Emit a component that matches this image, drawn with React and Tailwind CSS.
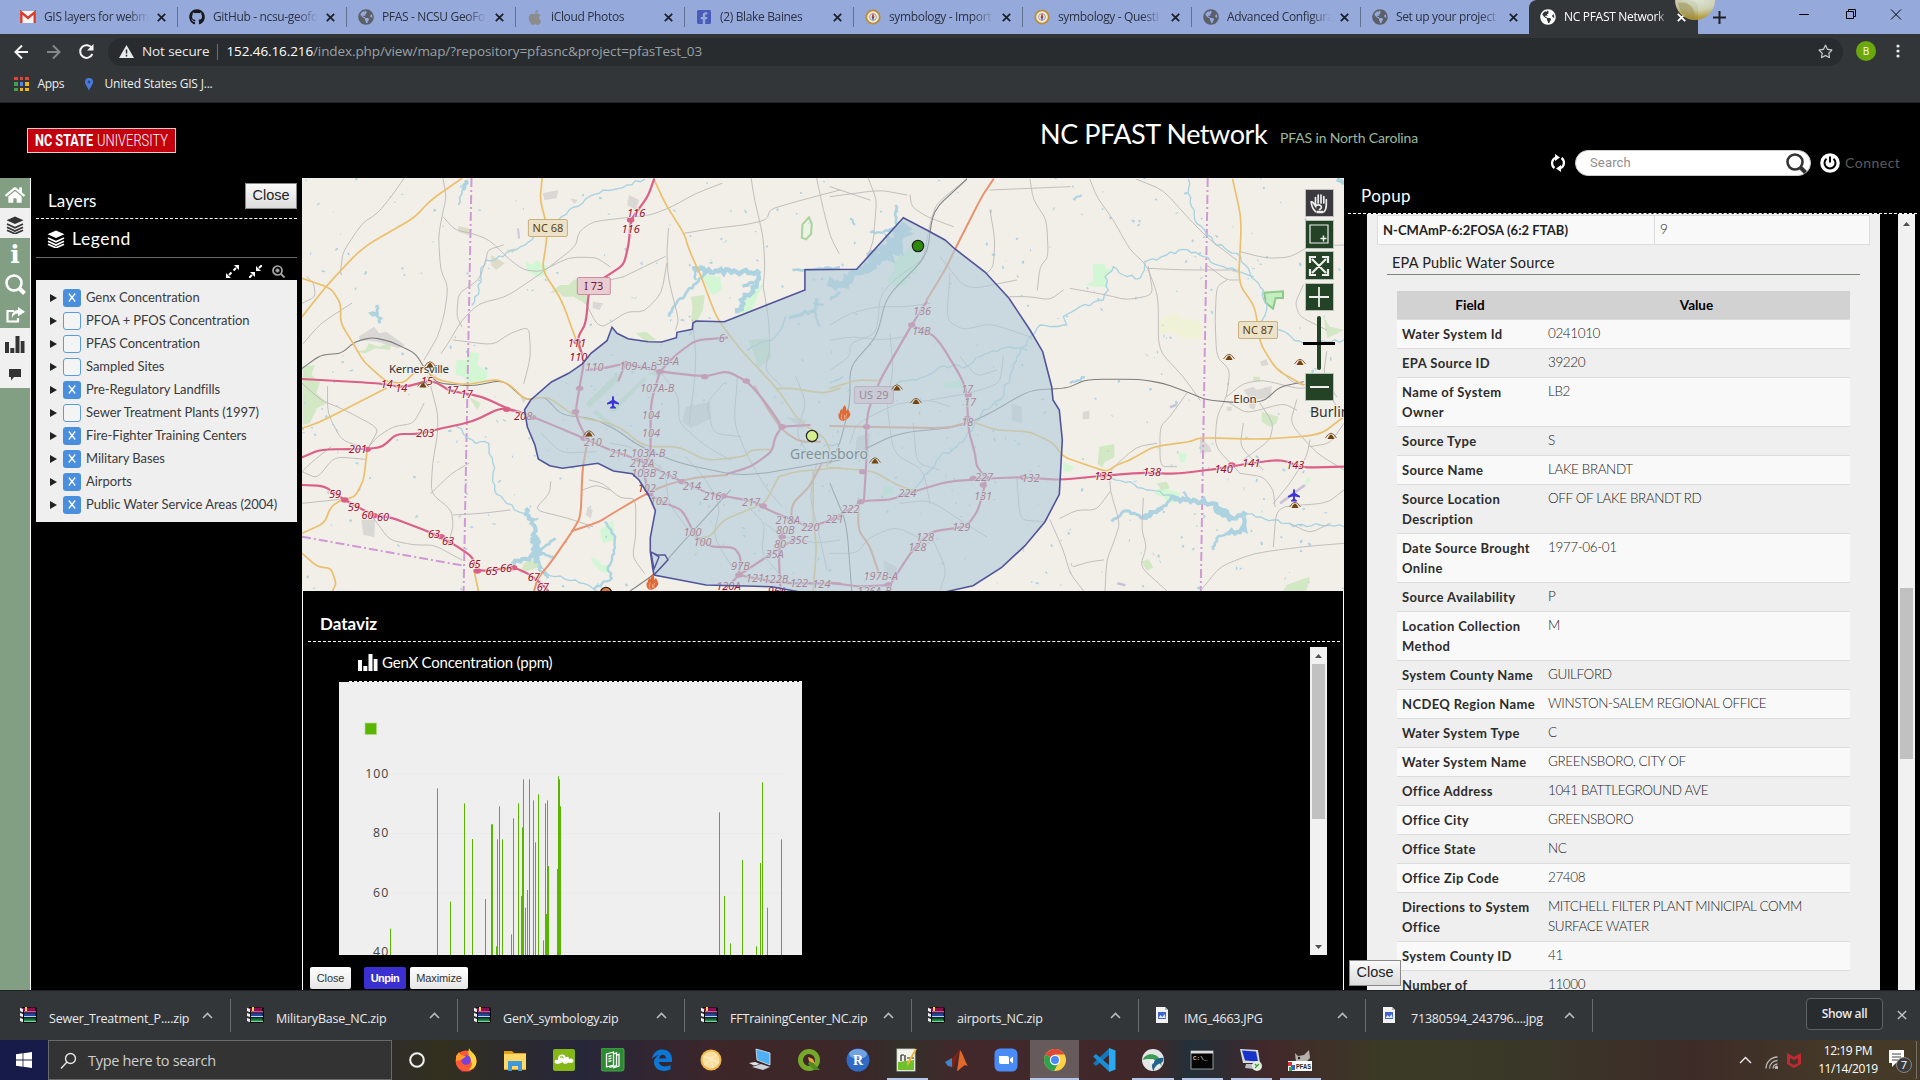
import React from "react";
import { FaGithub, FaApple, FaGlobeAmericas, FaFacebookSquare, FaRegStar, FaCommentAlt, FaHome } from "react-icons/fa";

/* ---------- Browser tab strip ---------- */

const Globe = ({ className }) => <FaGlobeAmericas className={className} size={16} />;

const Gmail = () => (
  <svg width="16" height="14" viewBox="0 0 16 14">
    <rect x="0" y="1" width="16" height="12" fill="#f4f4f4" />
    <path d="M1.3 13V2.4L8 8l6.7-5.6V13" fill="none" stroke="#d93a2e" strokeWidth="2.4" />
  </svg>
);

const Compass = () => (
  <svg width="16" height="16" viewBox="0 0 16 16">
    <circle cx="8" cy="8" r="7.6" fill="#b58f3a" />
    <circle cx="8" cy="8" r="5.8" fill="#f3ead0" />
    <circle cx="8" cy="8" r="3.4" fill="none" stroke="#8d92b8" strokeWidth=".9" />
    <path d="M8 4l1.4 4H6.6z" fill="#d0332b" />
    <path d="M8 12l1.4-4H6.6z" fill="#4a5b9c" />
  </svg>
);

const TABS = [
  { title: "GIS layers for webm", icon: <Gmail /> },
  { title: "GitHub - ncsu-geofo", icon: <FaGithub size={16} className="text-[#15181c]" /> },
  { title: "PFAS - NCSU GeoFo", icon: <Globe className="text-[#5b5f68]" /> },
  { title: "iCloud Photos", icon: <FaApple size={17} className="text-[#8c8c8c]" /> },
  { title: "(2) Blake Baines", icon: <FaFacebookSquare size={16} className="text-[#4a5cb8]" /> },
  { title: "symbology - Import", icon: <Compass /> },
  { title: "symbology - Questi", icon: <Compass /> },
  { title: "Advanced Configura", icon: <Globe className="text-[#5b5f68]" /> },
  { title: "Set up your project", icon: <Globe className="text-[#5b5f68]" /> },
];

const Cross = ({ size = 9, w = 1.8 }) => (
  <svg width={size} height={size} viewBox="0 0 9 9" stroke="currentColor" strokeWidth={w} className="shrink-0">
    <path d="M.8.8l7.4 7.4M8.2.8L.8 8.2" />
  </svg>
);

function TabStrip() {
  return (
    <div className="relative flex h-[34px] shrink-0 bg-[#96a9db] pl-[9px] text-[12px]">
      {TABS.map((t, i) => (
        <div key={i} className={i === 8 ? "flex w-[168px] shrink-0 items-center pl-[11px] text-[#2a3140]" : "flex w-[169px] shrink-0 items-center pl-[11px] text-[#2a3140]"}>
          <span className="flex w-4 shrink-0 justify-center">{t.icon}</span>
          <span className="ml-2 w-[105px] overflow-hidden whitespace-nowrap tracking-[-0.35px] [mask-image:linear-gradient(90deg,#000_80%,transparent)]">{t.title}</span>
          <span className="ml-[8px] flex w-[9px] text-[#1c212b]"><Cross /></span>
          <span className={i === 8 ? "ml-[11px] h-5" : "ml-[11px] h-5 w-px bg-[#60708f]"} />
        </div>
      ))}
      <div className="flex w-[169px] shrink-0 items-center rounded-t-lg bg-[#323639] pl-[11px] text-white">
        <Globe className="shrink-0 text-white" />
        <span className="ml-2 w-[105px] overflow-hidden whitespace-nowrap tracking-[-0.3px] [mask-image:linear-gradient(90deg,#000_88%,transparent)]">NC PFAST Network</span>
        <span className="ml-[8px]"><Cross /></span>
      </div>
      <svg className="absolute top-0 left-[1674px]" width="42" height="21" viewBox="0 0 42 21">
        <defs>
          <radialGradient id="ball" cx=".5" cy="-.1" r="1">
            <stop offset="0" stopColor="#e9efdc" />
            <stop offset=".6" stopColor="#d3d6b0" />
            <stop offset="1" stopColor="#b99b2c" />
          </radialGradient>
        </defs>
        <path d="M1 0a20 20 0 0 0 40 0z" fill="url(#ball)" fillOpacity=".9" />
        <path d="M4 3c10-2 18 4 17 17C11 19 5 12 4 3z" fill="#9b8f4f" fillOpacity=".55" />
      </svg>
      <div className="ml-[15px] flex items-center text-[#1d2027]">
        <svg width="13" height="13" viewBox="0 0 13 13" stroke="currentColor" strokeWidth="2"><path d="M6.5 0v13M0 6.5h13" /></svg>
      </div>
      <div className="absolute top-2 left-[1799px] flex text-black">
        <svg width="110" height="14" viewBox="0 0 110 14" fill="none" stroke="currentColor" strokeWidth="1">
          <path d="M0 6.500h10M92 1.500l10 10M102 1.500l-10 10" />
          <path d="M47.500 3.500h7v7h-7zM49.500 3.500v-2h7v7h-2" />
        </svg>
      </div>
    </div>
  );
}

function Toolbar() {
  return (
    <div className="flex h-[34px] shrink-0 items-center bg-[#323639] text-[14px]">
      <svg width="108" height="34" viewBox="0 0 108 34" fill="none" strokeWidth="2">
        <path d="M28 18H16M22 11.500L15.500 18l6.500 6.500" stroke="#f4f4f4" />
        <path d="M47 18h12M53 11.500l6.500 6.500-6.500 6.500" stroke="#85888a" />
        <path d="M92 14.500A6.300 6.300 0 1 0 92.300 20" stroke="#f4f4f4" />
        <path d="M93.500 10v6.500H87z" fill="#f4f4f4" />
      </svg>
      <div className="mt-px flex h-7 w-[1735px] items-center rounded-full bg-[#282c2f] pl-[11px] text-[#9aa0a6]">
        <svg width="15" height="13" viewBox="0 0 15 13"><path d="M7.500 0L15 13H0z" fill="#e8eaed" /><path d="M7.500 4.500v4M7.500 9.700v1.700" stroke="#282c2f" strokeWidth="1.500" /></svg>
        <span className="ml-2 text-[13.5px] tracking-[-0.1px] text-[#e8eaed]">Not secure</span>
        <span className="ml-2 h-4 w-px bg-[#6b6f73]" />
        <span className="ml-[8px] text-[13.5px] tracking-[-0.1px]"><span className="text-white">152.46.16.216</span>/index.php/view/map/?repository=pfasnc&amp;project=pfasTest_03</span>
        <FaRegStar className="mr-[10px] ml-auto text-[#c4c7ca]" size={15} />
      </div>
      <span className="ml-[13px] flex h-5 w-5 items-center justify-center rounded-full bg-[#6aa80e] text-[10px] text-white">B</span>
      <svg className="ml-5" width="4" height="16" viewBox="0 0 4 16" fill="#e8eaed"><circle cx="2" cy="3" r="1.600" /><circle cx="2" cy="8" r="1.600" /><circle cx="2" cy="13" r="1.600" /></svg>
    </div>
  );
}

function Bookmarks() {
  const dots = ["#e0443a", "#e0443a", "#e0443a", "#3fa14c", "#5b82e8", "#efb41a", "#3fa14c", "#efb41a", "#efb41a"];
  return (
    <div className="flex h-[35px] shrink-0 items-center border-b border-[#222527] bg-[#323639] pb-[2px] pl-[14px] text-[12px] text-[#eceef0]">
      <span className="grid grid-cols-3 gap-[2px]">
        {dots.map((c, i) => <svg key={i} width="3.500" height="3.500"><rect width="4" height="4" fill={c} /></svg>)}
      </span>
      <span className="ml-[9px] w-[30px] tracking-[-0.3px]">Apps</span>
      <svg className="ml-[17px]" width="8" height="13" viewBox="0 0 8 13"><path d="M4 0a4 4 0 0 1 4 4c0 3-3 5-4 9-1-4-4-6-4-9a4 4 0 0 1 4-4z" fill="#4a7bdc" /><circle cx="4" cy="4" r="1.400" fill="#274a94" /></svg>
      <span className="ml-[12px] tracking-[-0.2px]">United States GIS J...</span>
    </div>
  );
}

/* ---------- Application header ---------- */

function Header() {
  return (
    <header className="flex h-[75px] shrink-0 bg-black font-['Lato',sans-serif]">
      <svg className="mt-[25px] ml-[27px]" width="149" height="25" viewBox="0 0 149 25">
        <rect x=".5" y=".5" width="148" height="24" fill="#c4000e" stroke="#e9c9c9" />
        <g fill="#fff" fontFamily="Roboto" fontSize="16">
          <text x="8" y="18" fontWeight="700" textLength="58" lengthAdjust="spacingAndGlyphs">NC STATE</text>
          <text x="70" y="18" fontWeight="300" textLength="71" lengthAdjust="spacingAndGlyphs">UNIVERSITY</text>
        </g>
      </svg>
      <h1 className="mt-[13px] ml-[864px] w-[240px] text-[27px] leading-[36px] tracking-[-0.45px] whitespace-nowrap text-white">NC PFAST Network</h1>
      <span className="mt-[25px] w-[150px] text-[14px] leading-[20px] tracking-[-0.15px] whitespace-nowrap text-[#9db89d]">PFAS in North Carolina</span>
      <div className="mt-[46px] ml-[120px] flex h-7 items-center">
        <svg width="16" height="18" viewBox="0 0 16 18" fill="none" stroke="#fff" strokeWidth="2.200">
          <path d="M6 3.500A6 6 0 0 0 4.500 14M10 14.500A6 6 0 0 0 11.500 4" />
          <path d="M5 0l5 3.500-5 3.500zM11 11v7l-5-3.500z" fill="#fff" stroke="none" />
        </svg>
        <div className="ml-[9px] flex h-[26px] w-[236px] items-center rounded-full border border-[#ccc] bg-white pl-[14px] font-['Roboto',sans-serif] text-[13px] tracking-[0.15px] text-[#8e8e8e]">
          Search
          <svg className="mr-[3px] ml-auto" width="21" height="21" viewBox="0 0 21 21" fill="none" stroke="#333"><circle cx="9" cy="9" r="7.500" strokeWidth="2.600" /><path d="M14.500 14.500l5 5" strokeWidth="4" /></svg>
        </div>
        <svg className="ml-[9px]" width="20" height="20" viewBox="0 0 20 20"><circle cx="10" cy="10" r="9.800" fill="#fff" /><path d="M6.500 5.800a5.500 5.500 0 1 0 7 0M10 3.500v6" fill="none" stroke="#000" strokeWidth="2" /></svg>
        <span className="-mt-[2px] ml-[5px] text-[14px] tracking-[0.5px] text-[#5c5c5c]">Connect</span>
      </div>
    </header>
  );
}

/* ---------- Left side ---------- */

const Stack = ({ size = 18, color = "#fff" }) => (
  <svg width={size} height={size} viewBox="0 0 18 18">
    <path d="M9 .5l8.500 3.700L9 8 .5 4.200z" fill={color} />
    <path d="M1 8l8 3.700L17 8M1 11.300L9 15l8-3.700M1 14.300l8 3.500 8-3.500" fill="none" stroke={color} strokeWidth="1.700" />
  </svg>
);

const Bars = ({ color = "#fff" }) => (
  <svg width="20" height="17" viewBox="0 0 20 17" fill={color}><path d="M0 6h4v11H0zM5.300 12h4v5h-4zM10.500 0h4v17h-4zM15.700 5H19.500v12h-3.800z" /></svg>
);

const MENU = [
  { icon: <FaHome size={20} color="#fff" /> },
  { on: true, icon: <Stack color="#333" /> },
  { icon: <span className="font-['DejaVu_Serif',serif] text-[25px] leading-none font-bold text-white">i</span> },
  { icon: <svg width="21" height="21" viewBox="0 0 21 21" fill="none" stroke="#fff"><circle cx="9" cy="9" r="7.500" strokeWidth="2.600" /><path d="M14.500 14.500l5 5" strokeWidth="4" /></svg> },
  { icon: <svg width="19" height="16" viewBox="0 0 19 16"><path d="M8 4H1.500v10.500H12V11" fill="none" stroke="#fff" strokeWidth="2.200" /><path d="M12 0l7 4.800-7 4.800V6.500C9 6.500 7 8 6 11c-.5-5 2-8 6-8z" fill="#fff" /></svg> },
  { on: true, icon: <Bars color="#333" /> },
  { on: true, icon: <svg width="14" height="12" viewBox="0 0 14 12"><path d="M1 0h12v8H6l-3 3.500V8H1z" fill="#333" /></svg> },
];

const LAYERS = [
  ["Genx Concentration", true],
  ["PFOA + PFOS Concentration", false],
  ["PFAS Concentration", false],
  ["Sampled Sites", false],
  ["Pre-Regulatory Landfills", true],
  ["Sewer Treatment Plants (1997)", false],
  ["Fire-Fighter Training Centers", true],
  ["Military Bases", true],
  ["Airports", true],
  ["Public Water Service Areas (2004)", true],
];

const PlainButton = ({ className = "" }) => (
  <button className={"h-[26px] w-[52px] border border-[#8a8a8a] bg-gradient-to-b from-[#fafafa] to-[#dcdcdc] font-['Liberation_Sans',sans-serif] text-[14.5px] text-[#222] " + className}>Close</button>
);

function LeftPanel() {
  return (
    <aside className="flex w-[302px] shrink-0 bg-black">
      <nav className="w-[31px] border-r border-white bg-[#839f83]">
        {MENU.map((m, i) => (
          <div key={i} className={m.on ? "flex h-[30px] items-center justify-center bg-[#f0f0f0] pt-[3px]" : "flex h-[30px] items-center justify-center pt-[3px]"}>{m.icon}</div>
        ))}
      </nav>
      <div className="ml-[5px] w-[261px] font-['Lato',sans-serif]">
        <div className="flex h-[41px] justify-between border-b border-dashed border-white pl-3">
          <span className="mt-[12px] text-[17px] leading-[22px] tracking-[0.1px] text-white">Layers</span>
          <PlainButton className="mt-[5px]" />
        </div>
        <div className="flex h-[39px] items-center gap-[7px] border-b border-[#6a6a6a] pt-[2px] pl-[11px] text-[17.5px] tracking-[0.6px] text-white">
          <Stack /> Legend
        </div>
        <div className="flex h-[22px] items-center justify-end gap-[10px] pt-[4px] pr-[12px]">
          <svg width="13" height="13" viewBox="0 0 13 13" fill="#fff" stroke="#fff"><path d="M3 10l2.500-2.500M10 3L7.500 5.500" strokeWidth="2" /><path d="M13 0v5L8 0zM0 13V8l5 5z" stroke="none" /></svg>
          <svg width="13" height="13" viewBox="0 0 13 13" fill="#fff" stroke="#fff"><path d="M0 13l3-3M13 0l-3 3" strokeWidth="2" /><path d="M7 1v5h5zM6 12V7H1z" stroke="none" /></svg>
          <svg width="13" height="13" viewBox="0 0 13 13" fill="none" stroke="#aaa"><circle cx="5.500" cy="5.500" r="4.500" strokeWidth="1.700" /><path d="M9 9l3.500 3.500M5.500 3.500v4M3.500 5.500h4" strokeWidth="1.800" /></svg>
        </div>
        <ul className="h-[242px] bg-[#efefef] pt-[6px] text-[13px] text-[#3a3a3a]">
          {LAYERS.map(([name, on]) => (
            <li key={name} className="flex h-[23px] items-center pl-[14px]">
              <svg width="7" height="8" viewBox="0 0 7 8"><path d="M0 0l7 4-7 4z" fill="#222" /></svg>
              {on ? (
                <span className="ml-[6px] flex h-[18px] w-[18px] items-center justify-center rounded-[3px] bg-[#4a8fdd] text-white"><svg width="8" height="9" viewBox="0 0 8 9" stroke="currentColor" strokeWidth="1.300"><path d="M.8.5l6.400 8M7.200.5l-6.400 8" /></svg></span>
              ) : (
                <span className="ml-[6px] h-[18px] w-[18px] rounded-[3px] border border-[#5b9be0] bg-[#f4f4f4]" />
              )}
              <span className="ml-[5px] tracking-[-0.06px] whitespace-nowrap">{name}</span>
            </li>
          ))}
        </ul>
      </div>
    </aside>
  );
}

/* ---------- Map ---------- */

/* The western and eastern halves are digitised on separate grids. */
const WEST = "translate(300 170) scale(0.34439 0.33333)";
const EAST = "translate(830 170) scale(0.33333)";
const west = (x, y) => [300 + x * 0.34439, 170 + y / 3];
const east = (x, y) => [830 + x / 3, 170 + y / 3];

const parse = (pts) => pts.trim().split(/\s+/).map((p) => p.split(",").map(Number));

const line = (pts) => {
  const n = parse(pts);
  let d = `M${n[0][0]} ${n[0][1]}`;
  for (let i = 1; i < n.length - 1; i++) {
    const [ax, ay] = n[i];
    const [px, py] = n[i - 1];
    const [bx, by] = n[i + 1];
    d += `L${ax + (px - ax) * 0.3} ${ay + (py - ay) * 0.3}Q${ax} ${ay} ${ax + (bx - ax) * 0.3} ${ay + (by - ay) * 0.3}`;
  }
  const e = n[n.length - 1];
  return d + `L${e[0]} ${e[1]}`;
};

const random = (seed) => () => ((seed = (seed * 16807) % 2147483647) / 2147483647);

/* Meandering line: every segment is split and its joints pushed sideways. */
const meander = (pts, amp, step = 14) => {
  const n = parse(pts);
  const r = random(Math.round(n[0][0] * 31 + n[0][1] * 7 + 11));
  let d = `M${n[0][0]} ${n[0][1]}`;
  for (let i = 1; i < n.length; i++) {
    const [ax, ay] = n[i - 1];
    const [bx, by] = n[i];
    const len = Math.hypot(bx - ax, by - ay) || 1;
    const k = Math.max(1, Math.round(len / step));
    for (let j = 1; j <= k; j++) {
      const o = j === k ? 0 : (r() - 0.5) * 2 * amp;
      d += `L${(ax + ((bx - ax) * j) / k - ((by - ay) / len) * o).toFixed(1)} ${(ay + ((by - ay) * j) / k + ((bx - ax) / len) * o).toFixed(1)}`;
    }
  }
  return d;
};

const W = {
  minor: [
    "302,25 265,80 225,130 180,160 125,245 118,300", "415,25 425,80 412,140 402,200 408,300 430,350 420,430 400,500 360,570",
    "415,140 450,180 500,190 550,210 610,270 650,300 700,305 780,262 860,262 900,290", "1225,40 1150,70 1080,110 1020,135 930,145 850,155 810,185 800,230 700,310 600,380 520,400 470,450 430,520 410,550",
    "1070,175 1065,250 1070,330 1100,450 1090,480", "1115,190 1200,175 1290,165 1355,150 1365,118 1440,95 1568,60", "1310,25 1320,90 1345,200 1350,290 1345,350", "1500,25 1520,120 1540,200 1565,250",
    "590,225 545,240 540,270 520,330 460,370 455,440 470,470", "6,400 45,380 40,340 20,320", "6,640 60,690 130,720 230,775 200,830", "360,700 330,760 270,770 225,800 200,830",
    "380,650 400,730 400,790 385,880 380,970 440,1020 445,1070 430,1120", "6,905 50,925 100,860 190,868", "6,905 30,880 90,830", "445,1035 530,1030 610,1020", "210,1040 260,1110 330,1125 390,1125 470,1170",
    "840,930 880,940 930,985 975,985 975,1100 965,1160 1000,1210", "728,935 725,970 680,1020 780,1045 850,1070", "445,510 560,525 610,490 665,470 670,560 650,640", "905,455 950,425 1000,425 1050,370 1065,280",
    "905,455 880,470 860,460 830,400", "1345,350 1360,440 1365,540 1350,600 1400,650", "1270,620 1260,760 1300,860 1350,950 1400,1010", "1050,610 1100,680 1100,760 1180,830 1250,870", "1230,640 1180,700 1200,790 1280,800", "1120,860 1180,930 1220,1010 1200,1100 1260,1200",
    "1440,620 1470,700 1440,790 1480,860", "1350,1060 1400,1100 1500,1120 1568,1110", "1300,1010 1350,1060 1340,1150 1400,1220", "900,820 960,830 1060,900 1070,1000 1150,1110", "700,790 760,850 860,845", "6,1000 100,990 130,985", "1500,880 1480,980 1500,1060 1530,1200", "1140,450 1150,560 1145,640 1130,760",
    "10,520 60,460 150,400", "490,880 440,910 380,970", "80,650 80,730 120,810 190,835", "940,320 880,335 835,330", "820,960 860,945 900,960", "1060,260 1000,290 940,320",
  ],
  rail: ["6,595 60,555 120,550 160,515 210,502 265,515 335,550 365,600 400,640 500,648 590,630 655,690 710,680 760,735 850,745 920,780 980,825 1100,880 1290,920 1568,870", "1250,960 1180,1040 1100,1130 1030,1212 960,1262"],
  yellow: [
    "470,25 380,90 330,145 210,215 165,250 75,350 6,440", "6,325 90,355 118,400 118,460 160,530 185,575 250,635 300,640 350,590 400,630 480,645 570,628 610,645 655,690 720,680 800,740 920,765 1000,830 1100,830 1180,872 1290,860 1310,840 1370,838",
    "703,25 697,90 718,170 715,220 703,300 760,390 805,520 825,570", "1028,28 1060,100 1115,190 1130,240 1165,320 1210,445 1280,540 1385,655 1450,755 1520,800 1540,840 1530,890", "6,775 60,755 250,655", "195,840 185,930 160,980 120,990 90,1010 70,1060 6,1090", "6,1150 50,1190 90,1195 105,1240 95,1262", "505,1200 518,1262",
    "1385,655 1430,655 1520,670 1568,655", "1390,920 1350,1000 1300,1020 1230,1050 1190,1100 1150,1105", "1390,920 1440,905 1568,893", "1490,905 1490,1050 1500,1130 1490,1262",
  ],
  trunk: ["832,830 820,900 815,1040 790,1085 730,1175 690,1225 680,1262", "790,1083 870,1055 900,1035 990,980 1060,945 1150,922 1240,915", "1320,650 1360,720 1400,780 1450,815 1510,815", "1515,880 1480,950 1430,1000 1425,1050"],
  motor: [
    "6,627 230,640 300,652 375,632 400,640 435,662 530,680 600,715 650,730 680,742 825,805 900,840 985,870 1050,905 1110,935 1180,968 1240,980 1320,995 1360,1020 1430,1050 1480,1072 1540,1050 1568,1045",
    "6,862 60,838 200,837 240,830 280,792 345,792 400,778 500,755 580,715 620,722", "6,945 70,948 130,990 215,1037 265,1042 380,1088 440,1118 500,1160 515,1205 620,1192 665,1212 700,1240 720,1262",
    "1028,28 1010,80 960,150 955,220 940,285 885,322 840,350 830,460 805,505 825,575 812,650 800,725 810,760 830,800", "832,600 880,595 945,580 1045,605 1175,620 1240,603 1300,635 1350,695 1400,770 1380,800 1370,845 1310,890 1240,912",
    "945,580 925,632", "1045,605 1018,700 1018,860 995,880 1010,970 1060,1000 1110,1020 1150,1100 1190,1130 1260,1132 1280,1160 1275,1215 1230,1262", "1045,605 1090,555 1150,510 1240,503", "1275,1215 1400,1130 1450,1100", "1400,1090 1390,1150 1395,1262", "1275,1215 1400,1240 1568,1240", "1400,770 1480,765",
  ],
  knots: "195,838 600,718 130,990 215,1037 410,1100 515,1203 620,1193 675,742 805,515 812,655 800,725 825,805 945,580 1045,605 1175,620 1296,633 1400,770 1015,970 1110,935 1230,978 1345,1008 1275,1215 1400,1100 960,150 985,870",
  river: ["1000,28 950,45 880,60 820,100 760,140 690,190 640,230 590,260 540,270 525,310 520,360 500,405", "455,770 510,820 548,820 560,880 565,960 600,1000 650,1030", "1568,820 1520,830", "690,1190 740,1220 800,1230 860,1262", "1410,440 1380,500 1300,540"],
  lakes: [
    [12, "655,1015 672,1060 685,1100 692,1150 640,1175 612,1182"], [8, "692,1150 742,1105"], [8, "700,1150 736,1160"], [16, "690,1135 688,1180"], [8, "690,1170 700,1205 720,1225"], [6, "665,1050 692,1045"], [18, "672,1100 690,1150"],
    [14, "1140,296 1200,308 1260,302 1335,312"], [13, "1330,310 1325,350 1290,385 1270,430"], [8, "1180,300 1150,340 1120,370 1085,410 1072,440"], [10, "1285,350 1320,340"], [7, "1140,290 1150,330"],
    [8, "1568,292 1510,295 1430,300"], [10, "1500,385 1495,420 1460,430 1420,445"], [7, "1490,400 1520,405"], [6, "1495,425 1510,470"], [8, "1568,365 1540,390"],
    [11, "482,30 472,60"], [5, "470,60 460,105"], [8, "222,405 225,430 205,430 235,445 232,460"], [7, "885,1055 915,1100 912,1150 895,1190 905,1225 850,1258"],
  ],
};
const E = {
  minor: [
    "410,25 380,55", "115,25 140,90 135,150 130,215 100,290", "230,75 150,60 0,80", "240,75 245,110 290,140 370,170", "480,120 495,210 490,290 470,310", "780,28 800,80 850,150 900,240 950,285 985,380 985,540 1060,620 1110,690", "920,28 1000,60 1080,150 1140,210 1220,270", "600,28 610,90 650,150 655,260 630,290 622,360",
    "1542,225 1440,228 1380,262 1310,265 1230,245", "700,360 660,390 600,380 540,380", "720,355 830,375 890,390 970,375 955,290", "955,295 1060,300 1225,300", "1190,330 1160,350 1155,450 1160,560 1200,600 1190,680 1160,740 1155,830 1230,910", "1225,330 1190,330 1130,285",
    "1420,345 1395,400 1410,440 1490,480", "1190,680 1240,640 1300,630 1420,660 1500,620", "1070,670 1020,740 990,770 990,890 1040,890", "980,820 920,830 840,900 840,960 870,1060 850,1120 830,1170 825,1262", "690,1045 740,1020 800,1020 840,965", "660,1050 700,1140 720,1210 760,1262",
    "940,985 935,1080 950,1130 930,1190 1010,1262", "1542,1120 1420,1130 1270,1150 1170,1190 1112,1262", "1542,960 1490,1000 1340,1010 1330,1130", "1230,910 1300,920 1330,960 1335,1010", "1440,810 1430,860 1380,940 1330,1000", "1350,600 1390,640 1480,650 1542,740", "0,465 60,430 140,410 230,410 300,400", "0,510 70,500 150,510 230,500",
    "0,600 60,560 60,520 140,490 150,380 190,330 280,270 300,160 320,100 410,28", "60,820 80,760 200,700 300,690 360,710", "210,1000 300,990 420,1070 470,1100", "250,760 260,880 330,900", "0,1150 80,1150 120,1100 200,1070 300,1120", "360,310 350,450 400,480 480,460 600,500", "330,260 410,360 560,330",
    "520,560 510,640 420,670 300,690", "560,920 570,1050 640,1055", "300,1090 350,1200 330,1262", "390,560 440,620 500,600", "1490,545 1480,620 1520,680", "1240,760 1230,830 1300,900", "1290,700 1330,760 1320,810 1240,870", "1400,690 1380,760 1460,850 1542,900", "180,490 190,600 170,700 190,850 280,900 300,1000",
    "820,1170 780,1175 730,1190", "1542,760 1500,820 1440,830", "1200,700 1250,730 1360,700 1400,720", "1380,1060 1440,1090 1500,1060", "480,60 600,55 720,50", "0,50 120,90",
  ],
  rail: ["110,835 180,800 240,785 350,775 410,762 480,730 600,660 710,655 770,628 930,628 1000,640 1070,665 1130,690 1220,698 1300,695 1350,650 1420,635", "410,28 310,120 290,260 170,380 140,500 60,590 60,700 30,820 0,880", "0,940 50,1060 65,1262"],
  yellow: ["430,757 500,780 600,785 670,820 700,860 770,885 830,905 860,885 900,870 970,830 1080,815 1110,803 1300,808 1470,795 1542,740", "1208,28 1235,150 1225,340 1275,410 1290,520 1340,600 1420,645", "0,655 80,630 150,632", "0,893 130,903 200,945 260,965"],
  trunk: ["490,28 455,80 375,238 345,300 290,390", "0,768 100,770 350,775 415,757", "85,1000 85,1080 120,1130 150,1220", "150,630 190,560 245,465"],
  motor: [
    "290,395 245,465 150,630 115,720 108,780 110,860 102,990", "245,465 320,500 410,650 415,780 435,850 440,890 470,925 445,1020 410,1070 300,1085 240,1150 180,1245", "0,1048 40,1030 100,992 180,990 250,965 350,935 480,925 575,922",
    "575,922 690,930 840,915 940,908 1040,912 1170,895 1230,885 1350,868 1420,893 1542,890", "0,1238 90,1250 180,1245",
  ],
  knots: "245,465 415,675 412,745 470,925 460,945 580,922 110,770 98,905 92,995 175,1245 430,925 820,915 1205,885",
  river: ["1075,28 1085,110 1100,160 1150,215 1220,250 1260,310 1300,360 1310,420 1290,460 1350,480 1420,520 1542,510", "945,275 980,270 1010,255 1060,238 1120,260 1180,290 1270,320", "945,275 930,325 880,315 850,290 825,320 835,360 820,390 750,410 700,440 710,465 660,470 630,465 600,500 560,560 540,620 510,690 460,720 430,770 380,830 330,860 260,950 200,980", "200,640 260,630 330,590 410,590 450,560 540,530 590,540", "830,925 900,935 950,960 1040,980", "1240,1030 1330,1050 1390,1070 1470,1065 1542,1070"],
  lakes: [
    [26, "210,165 205,220 150,262 100,290"], [20, "100,290 60,330 0,350"], [8, "196,105 202,165"], [7, "120,188 190,182"], [12, "160,225 110,255"],
    [9, "845,1055 890,1022 940,1045 990,1020 1035,978"], [12, "935,1045 1000,1015"], [13, "1020,985 1090,990 1150,1000 1200,1040 1250,1035"], [16, "1150,1010 1205,1050"], [13, "1240,1040 1245,1080 1190,1090"], [8, "1190,1090 1160,1105 1150,1140"], [7, "1060,965 1075,990"],
    [7, "720,640 765,622"], [12, "1520,28 1542,42"], [5, "0,640 40,620"], [6, "730,90 755,75"], [6, "60,145 75,165"],
  ],
};

const LABELS_W = [
  ["116", 976, 128], ["116", 960, 178], ["111", 804, 520], ["110", 808, 561], ["110", 855, 590], ["109-A-B", 982, 587], ["3B-A", 1068, 573], ["6", 1225, 505], ["107A-B", 1037, 653], ["104", 1019, 736], ["104", 1019, 788], ["210", 850, 817], ["211", 925, 848], ["103A-B", 1011, 848], ["212A", 993, 878], ["103B", 998, 909], ["213", 1069, 916], ["214", 1138, 947], ["216", 1197, 977], ["217", 1310, 997], ["102", 1007, 953], ["102", 1042, 993], ["218A", 1416, 1049], ["80B", 1409, 1079], ["220", 1482, 1071], ["221", 1552, 1046], ["100", 1140, 1085], ["100", 1169, 1116], ["80", 1394, 1121], ["35C", 1448, 1111], ["35A", 1378, 1153], ["97B", 1279, 1189], ["121", 1321, 1224], ["122B", 1382, 1226], ["122", 1449, 1238], ["124", 1514, 1242], ["120A", 1244, 1247], ["96A", 1385, 1262],
  ["14", 252, 643], ["14", 294, 653], ["15", 368, 633], ["17", 442, 660], ["17", 484, 671], ["208", 648, 737], ["203", 364, 788], ["201", 168, 838], ["59", 102, 972], ["59", 156, 1011], ["60", 196, 1034], ["60", 241, 1040], ["63", 389, 1093], ["63", 430, 1112], ["65", 507, 1181], ["65", 556, 1203], ["66", 598, 1195], ["67", 679, 1220], ["67", 705, 1252],
];
const LABELS_E = [
  ["136", 276, 424], ["14B", 274, 482], ["17", 411, 656], ["17", 420, 697], ["18", 412, 757], ["227", 462, 922], ["132", 602, 925], ["131", 459, 978], ["224", 232, 970], ["222", 61, 1016], ["129", 394, 1072], ["128", 285, 1100], ["128", 262, 1131], ["197B-A", 152, 1219], ["126A-B", 133, 1262], ["135", 820, 917], ["138", 966, 907], ["140", 1181, 896], ["141", 1264, 880], ["143", 1396, 886],
];

const AREA =
  "M804.900 269.700V290L724.300 321.700 696 321 693 323 692.300 329.300 677 332.300 676.400 337.700 661.600 342 648 341.700 628 338.700 617 333.300 612 327.300 607 340.700 591 353.300 582.400 364 568.600 373.300 551.400 382 530.700 400 524.500 410 527.300 426.700 534.900 445 538.300 459 549.700 465.700 562.400 468.300 598 463.300 613.400 471 632.300 473.700 639 480 648.500 495 655.400 510.700 650.300 537.700V551.700L653 570 654 575 680 580 706 585 772 586.700 800 592H945L973 585.700 1001.700 567.300 1025 545.700 1045 521.700 1059.300 494.300 1062.300 440 1059.300 410 1053 400 1051.700 386.700 1042.700 351.700 1030 330 1009 298.300 985 272 955 249 945 240 926.700 230 903.300 217.700 856.700 269.300z";

const speckles = (() => {
  const r = random(7);
  return Array.from({ length: 460 }, () => [302 + r() * 1041, 178 + r() * 413, 0.4 + r() * 0.9, 0.5 + r() * 1.6, r() * 180]);
})();

const Network = ({ data, transform }) => (
  <g transform={transform} fill="none" strokeLinecap="round" strokeLinejoin="round">
    <g stroke="#a9d2e0" strokeWidth="4">{data.river.map((p, i) => <path key={i} d={meander(p, 6)} />)}</g>
    <g stroke="#aed3e0" strokeLinecap="butt" strokeLinejoin="miter">
      {data.lakes.map(([w, p], i) => <path key={i} d={meander(p, w * 0.55, 8)} strokeWidth={w} />)}
    </g>
    <g stroke="#bdbbba" strokeWidth="2.800">{data.minor.map((p, i) => <path key={i} d={line(p)} />)}</g>
    <g stroke="#7d7d7d" strokeWidth="3.200">{data.rail.map((p, i) => <path key={i} d={line(p)} />)}</g>
    <g stroke="#ebc06c" strokeWidth="5">{data.yellow.map((p, i) => <path key={i} d={line(p)} />)}</g>
    <g stroke="#e89470" strokeWidth="6">{data.trunk.map((p, i) => <path key={i} d={line(p)} />)}</g>
    <g stroke="#db6088" strokeWidth="6.500">{data.motor.map((p, i) => <path key={i} d={line(p)} />)}</g>
    <g fill="#db6088">{parse(data.knots).map(([x, y], i) => <ellipse key={i} cx={x} cy={y} rx="11" ry="8" />)}</g>
  </g>
);

const Labels = ({ list, at }) =>
  list.map(([t, x, y], i) => {
    const [px, py] = at(x, y);
    return <text key={i} x={px} y={py + 4}>{t}</text>;
  });

const Shield = ({ x, y, w, text, fill, stroke, color }) => (
  <g>
    <rect x={x - w / 2} y={y - 8.500} width={w} height="17" rx="1.500" fill={fill} stroke={stroke} />
    <text x={x} y={y + 4} textAnchor="middle" fontSize="11" fill={color}>{text}</text>
  </g>
);

const Mound = ({ x, y }) => (
  <g transform={`translate(${x} ${y})`}>
    <path d="M-3.500 2.500Q-1.500-2 0-2T3.500 2.500z" fill="#74430f" />
    <path d="M-5.500 1.500Q0-8 5.500 1.500" fill="none" stroke="#8a6238" strokeWidth="1" />
  </g>
);
const Flame = ({ x, y }) => (
  <g transform={`translate(${x} ${y})`}>
    <path d="M0-9c2.500 3 1.500 5 2 6 .8-.5 1-1.500 1-2.500C5-3 5.500-1 5.300 0c.4-.4.5-.8.5-1.300C7 4-1 8-3.500 6.500-6 5-6.500 1.500-5.500-1.500c.1.700.3 1.200.7 1.600C-5-2.500-4-4-2.800-5.500c0 1 .2 1.700.6 2.300C-2.500-5.500-1-7 0-9z" fill="#dd6a36" />
    <path d="M-2 6.500C-4 4-3 1-2.200-.5M2 6C.5 4 1.500 1 2.500-.5M0 5V1" stroke="#f0b493" strokeWidth=".8" fill="none" />
  </g>
);
const Plane = ({ x, y }) => (
  <path transform={`translate(${x} ${y})`} d="M0-6c1 0 1 1 1 4l5 3v1.500L1 1.500V4l2 1.500v1H-3v-1L-1 4V1.500l-5 1V1l5-3c0-3 0-4 1-4z" fill="#3d36d8" />
);

function MapView() {
  return (
    <div className="relative h-[413px] w-[1042px] overflow-hidden bg-[#f2efe9]">
      <svg width="1042" height="413" viewBox="302 178 1042 413" fontFamily="'Noto Sans'">
        <rect x="302" y="178" width="1042" height="413" fill="#f2efe9" />
        {/* parks and built-up land */}
        <g transform={WEST}>
          <g fill="#c8facc" fillOpacity=".75">
            <path d="M455 570l30 0 5-25 30 5-5 35 30 20-5 30-50 10-15-25-25-5zM1165 315l55 5 5 40-25 15-10-10zM1350 335l-20 40-20 50-35 5 20-40 15-15zM845 1160l20 10 10 15 25 0-10 25-15-5-25-25zM870 1080l40-30 5 60-35 10zM655 275l20 10 10-15 35 20-5 25-25 5-30-15z" />
          </g>
          <g fill="#cde5bd" fillOpacity=".85">
            <path d="M725 370l30-25 25 0 15-15 40-10 20 15-20 20 0 50-40-25-30 0-15-15zM1135 380l40-5-5 45-15 30-20 5 5-40zM975 490l30-5 30 25-30 5zM8 590l35-5-10 30 25 20-10 35 30 30-50 25-20-10zM490 680l35 20-10 20zM160 545l30-5 10-20 30 10 40-15-10 25-40-5-30 15zM1050 600l-40 10 30 10zM1300 510l60-5 10 60-40 30-10-40zM830 700l90-90 15 10-95 95zM860 720l60 50-10 8-60-50zM900 720l100-100 5 10-95 100zM650 1180l40-20 10 30-60 20zM8 700l40 20-20 40-20 5z" />
          </g>
          <g fill="#d9d8d5">
            <path d="M705 70l45-10-5 25-35 5zM955 75l30 15-10 30-25-15zM170 500l45-30 15 20 20-5 55 40-20 10-60-20-50-5zM178 1050l40-3-2 55-32-8zM850 395l30 5-10 20-20-5zM835 1010l15 10-5 25-15-10zM640 680l20 5-12 15zM1120 710l70-15 5 50-60 30-25-20zM1410 740l60 10-10 30zM785 85l22 5-10 12z" />
            <path d="M555 255l40 25-25 20-15-15zM460 168l40 10-10 18-30-10zM598 240l30-5-10 15z" fill="#dcdcc9" />
          </g>
          <path d="M633 175l3 30" stroke="#cfc9dc" strokeWidth="6" />
          <path d="M1478 142l8 20-2 30-15 16-12-5 2-40z" fill="#edf3e4" stroke="#abd39f" strokeWidth="6" />
        </g>
        <g transform={EAST}>
          <g fill="#c8facc" fillOpacity=".75">
            <path d="M788 282l37 0 0 15 25 0-20 20 5 35-70-5 25-15zM240 230l30 20-10 60-30 10 0 25-40 5-20-20 25-30-5-20zM345 635l60-5-5 25-60 0zM980 960l20-10 20 10 30 10-5 25-25 5-20-20-25-5zM700 875l30 15-5 15-25-2zM1045 850l25 0-5 30-15-5zM160 950l30 0 0 20-30 10zM1430 920l15 10-20 15z" />
          </g>
          <path d="M1303 368l56-4v20h-22l-8 32-22-18z" fill="#c4eec0" stroke="#8ccb8c" strokeWidth="6" />
          <path d="M985 455l30-20 25-8 10 15 65 13 0 50-50 0-30-15-50 0z" fill="#eff2d6" />
          <g fill="#cde5bd" fillOpacity=".85"><path d="M808 830l45-8 0 40-30 15-5 15-15-10zM1295 725l50 15-5 20-20 10-25-15zM1480 440l20 30 42 10-50 25zM935 1175l20-8 15 25-20 10zM1370 1245l40-15 30-10-10 42-70 0zM1270 620l20 0 0 15-20 0zM980 940l30-5 10 20-25 5z" /></g>
          <g fill="#d9d8d5"><path d="M758 727l20-6 0 25-20 2zM1240 660l30-10 10 10 45-12-2 35-40 5-10 30-15-5 0-30zM1290 575l20-8 5 18-20 3zM1110 800l30 30 5 15-35 5zM80 800l40-10-5 70-40 0zM545 700l30 10 0 50-30-10zM1190 710l15 0 0 12-15 0zM160 1170l40 20 0 40-35-20z" /></g>
          <path d="M1350 1000l75-55M1020 712l20-8M862 1240l24 6" stroke="#c7c3d6" strokeWidth="8" />
        </g>
        <g fill="#aed3e0">
          {speckles.map(([x, y, rx, ry, a], i) => <ellipse key={i} cx={x} cy={y} rx={rx} ry={ry} transform={`rotate(${a} ${x} ${y})`} />)}
        </g>
        <g stroke="#cf9ad3" strokeWidth="2" strokeDasharray="9 3 2 3" fill="none">
          <path d="M471.500 178L463.600 591M302 536.700L463.500 565.700M1207.700 178L1200.700 591" />
        </g>
        <Network data={W} transform={WEST} />
        <Network data={E} transform={EAST} />
        <g fontSize="11" fontStyle="italic" textAnchor="middle" fill="#9c1233" stroke="#f2efe9" strokeWidth="2" strokeOpacity=".7" paintOrder="stroke">
          <Labels list={LABELS_W} at={west} />
          <Labels list={LABELS_E} at={east} />
        </g>
        <Shield x={547.900} y={228} w={39} text="NC 68" fill="#ece2c8" stroke="#c9b07c" color="#5b4012" />
        <Shield x={593.800} y={286} w={33} text="I 73" fill="#e8ccd2" stroke="#cf8a9f" color="#70183c" />
        <Shield x={1258} y={330} w={39} text="NC 87" fill="#ece2c8" stroke="#c9b07c" color="#5b4012" />
        <Shield x={873.800} y={395} w={39} text="US 29" fill="#ecc9cf" stroke="#cf8a9f" color="#70183c" />
        <g textAnchor="middle" fill="#333" stroke="#f2efe9" strokeWidth="2" paintOrder="stroke">
          <text x="419" y="372.500" fontSize="11.500" textLength="60">Kernersville</text>
          <text x="829" y="459" fontSize="14">Greensboro</text>
          <text x="1245" y="403" fontSize="11.500">Elon</text>
          <text x="1310" y="417" fontSize="14" textAnchor="start">Burlington</text>
        </g>
        <path d={AREA} fill="#b1ccd8" fillOpacity=".62" stroke="#52549a" strokeWidth="1.600" />
        <path d="M651 552l6 3 8 0 3 5-14 15M651 552l3 17 5-12-5-3" fill="none" stroke="#52549a" strokeWidth="1.400" />
        {[[430, 365], [423, 385], [589, 434], [897, 388], [916, 401.500], [875, 461], [1229, 357.500], [1300, 362.500], [1331, 436.500], [1295, 505.500]].map(([x, y], i) => <Mound key={i} x={x} y={y} />)}
        <Plane x={613} y={402} />
        <Plane x={1294} y={495} />
        <Flame x={844.500} y={414} />
        <Flame x={652.500} y={583} />
        <g stroke="#222" strokeWidth="1.200">
          <circle cx="918" cy="246" r="5.700" fill="#2e8b0a" />
          <circle cx="812" cy="436" r="5.600" fill="#d6ee8e" />
          <circle cx="606" cy="593" r="5.600" fill="#e07b3a" />
        </g>
      </svg>
      <div className="absolute top-[11px] right-[9px] flex w-[32px] flex-col items-center">
        <ToolButton dark>
          <path d="M7.500 19.500C5 17.500 3.500 13.500 3.200 9.800c1.500-.2 2.500.8 3.300 2.700L7.500 14V5.500M10.200 11V3M13 11V3M15.800 11V4.500M18.300 7.500V13c0 3.500-1 5.500-2.500 7M7.500 14c2-1.500 4-1.500 5.500 0 1 1.500 0 3-1.500 3.500" strokeWidth="1.700" strokeLinecap="round" />
          <path d="M8.500 20h6.500" strokeWidth="2.500" />
        </ToolButton>
        <ToolButton><path d="M2 2h18v18H2z" strokeWidth="1.200" /><path d="M15.500 12.500v6M12.500 15.500h6" strokeWidth="1.500" /></ToolButton>
        <ToolButton><path d="M2 8V2h6M14 2h6v6M20 14v6h-6M8 20H2v-6M4 4l14 14M18 4L4 18" strokeWidth="2.200" /></ToolButton>
        <ToolButton><path d="M11 1v20M1 11h20" strokeWidth="1.800" /></ToolButton>
        <div className="relative mt-[2px] h-[54px] w-1 rounded bg-[#234226]">
          <div className="absolute top-[26px] left-[-14px] h-[3px] w-8 bg-black" />
        </div>
        <div className="mt-[3px]"><ToolButton><path d="M2 11h19" strokeWidth="2" /></ToolButton></div>
      </div>
    </div>
  );
}

const ToolButton = ({ dark, children }) => (
  <div className={"mb-[2.800px] flex h-[28.400px] w-[29px] items-center justify-center border border-[#fafafa]/70 " + (dark ? "bg-[#3b3b3f]" : "bg-[#234226]")}>
    <svg width="22" height="22" viewBox="0 0 22 22" fill="none" stroke="#eee">{children}</svg>
  </div>
);

/* ---------- Dataviz dock ---------- */

const BARS = [[271, 1016], [412, 595], [451, 935], [493, 640], [517, 747], [556, 927], [574, 703], [577, 703], [589, 1069], [592, 748], [598, 649], [607, 748], [634, 1033], [640, 685], [655, 640], [664, 918], [667, 712], [670, 568], [676, 953], [682, 900], [688, 568], [700, 631], [706, 757], [715, 613], [730, 1051], [736, 640], [739, 972], [742, 631], [745, 828], [772, 837], [775, 559], [778, 568], [781, 649], [1258, 667], [1273, 918], [1291, 1060], [1327, 810], [1369, 1069], [1381, 819], [1387, 577], [1402, 953], [1444, 748]];

const Chart = () => (
  <svg width="463" height="273" viewBox="117 276 1389 819" className="bg-[#efefef]">
    <rect x="195" y="399" width="35" height="35" fill="#5ab500" stroke="#b9dd9a" strokeWidth="2" />
    <g fill="#ebebeb">{[550, 729, 908, 1086].map((y) => <rect key={y} x="270" y={y} width="1178" height="3" />)}</g>
    <g fontFamily="'Open Sans'" fontSize="37" fill="#444" textAnchor="end">
      <text x="265" y="563" textLength="69">100</text>
      <text x="265" y="741" textLength="46">80</text>
      <text x="265" y="921" textLength="46">60</text>
      <text x="265" y="1099" textLength="46">40</text>
    </g>
    <g fill="#5ab500">{BARS.map(([x, y], i) => <rect key={i} x={x - 1} y={y} width="3" height={1095 - y} />)}</g>
  </svg>
);

const Arrow = ({ down }) => (
  <svg width="7" height="4" viewBox="0 0 7 4"><path d={down ? "M0 0h7L3.500 4z" : "M0 4h7L3.500 0z"} fill="#505050" /></svg>
);

function Dock() {
  const small = "h-[22px] rounded-[2px] font-['Liberation_Sans',sans-serif] text-[11px] tracking-[-0.1px]";
  return (
    <section className="flex h-[399px] w-[1042px] flex-col border-x border-white bg-black pl-[5px] font-['Lato',sans-serif] text-white">
      <h2 className="mr-[3px] h-[51px] border-b border-dashed border-white pt-[22px] pl-[12px] text-[17px] leading-[22px] font-bold">Dataviz</h2>
      <div className="flex h-[313px] pt-[5px]">
        <div className="ml-[31px] w-[463px]">
          <div className="ml-[10px] flex h-[35px] items-center gap-[4px] border-b border-dashed border-white pb-[3px] pl-[9px] text-[15px] tracking-[-0.2px]"><Bars /> GenX Concentration (ppm)</div>
          <Chart />
        </div>
        <div className="mr-[16px] ml-auto flex h-[308px] w-[17px] flex-col items-center bg-[#f1f1f1]">
          <span className="flex h-[17px] items-center"><Arrow /></span>
          <span className="h-[155px] w-[13px] bg-[#c1c1c1]" />
          <span className="mt-auto flex h-[17px] items-center"><Arrow down /></span>
        </div>
      </div>
      <div className="mt-[12px] flex pl-[2px]">
        <button className={small + " w-[41px] bg-gradient-to-b from-white to-[#e6e6e6] text-[#333]"}>Close</button>
        <button className={small + " ml-[13px] w-[42px] bg-[#3a2fd0] font-bold tracking-[-0.5px] text-white"}>Unpin</button>
        <button className={small + " ml-[4px] w-[58px] bg-gradient-to-b from-white to-[#e6e6e6] text-[#333]"}>Maximize</button>
      </div>
    </section>
  );
}

/* ---------- Popup ---------- */

const FIELDS = [
  [["Water System Id"], ["0241010"]],
  [["EPA Source ID"], ["39220"]],
  [["Name of System", "Owner"], ["LB2"]],
  [["Source Type"], ["S"]],
  [["Source Name"], ["LAKE BRANDT"]],
  [["Source Location", "Description"], ["OFF OF LAKE BRANDT RD"]],
  [["Date Source Brought", "Online"], ["1977-06-01"]],
  [["Source Availability"], ["P"]],
  [["Location Collection", "Method"], ["M"]],
  [["System County Name"], ["GUILFORD"]],
  [["NCDEQ Region Name"], ["WINSTON-SALEM REGIONAL OFFICE"]],
  [["Water System Type"], ["C"]],
  [["Water System Name"], ["GREENSBORO, CITY OF"]],
  [["Office Address"], ["1041 BATTLEGROUND AVE"]],
  [["Office City"], ["GREENSBORO"]],
  [["Office State"], ["NC"]],
  [["Office Zip Code"], ["27408"]],
  [["Directions to System", "Office"], ["MITCHELL FILTER PLANT MINICIPAL COMM", "SURFACE WATER"]],
  [["System County ID"], ["41"]],
  [["Number of"], ["11000"]],
];

function Popup() {
  return (
    <aside className="relative flex w-[576px] flex-col bg-black font-['Lato',sans-serif]">
      <h2 className="mr-[3px] ml-[4px] h-[36px] shrink-0 border-b border-dashed border-white pt-[7px] pl-[13px] text-[17px] leading-[22px] tracking-[0.4px] text-white">Popup</h2>
      <div className="flex min-h-0 flex-1">
        <div className="ml-[23px] w-[513px] overflow-hidden bg-[#efefef] px-[10px] pt-px text-[13.500px]">
          <div className="flex h-[30px] w-[493px] border border-[#dcdcdc] bg-[#f9f9f9] leading-[28px] text-[#222]">
            <b className="w-[277px] border-r border-[#dcdcdc] pl-[5px] text-[13px] tracking-[0.05px]">N-CMAmP-6:2FOSA (6:2 FTAB)</b>
            <span className="pl-[5px] leading-[26px] font-light">9</span>
          </div>
          <h3 className="mx-[10px] h-[30px] border-b border-[#7d857d] pl-[5px] text-[14.500px] leading-[36px] tracking-[0.2px] text-[#222]">EPA Public Water Source</h3>
          <div className="mt-[16px] ml-[10px] w-[453px] translate-x-[10px] text-[#2c2c2c]">
            <div className="flex h-[28px] bg-[#d2d2d2] text-center leading-[29px] font-bold text-black">
              <span className="w-[146px]">Field</span>
              <span className="flex-1">Value</span>
            </div>
            {FIELDS.map(([label, value], i) => (
              <div key={i} className={"flex border-t border-[#dcdcdc] pt-[3px] pb-[5px] leading-[20px] " + (i % 2 ? "bg-[#efefef]" : "bg-[#f9f9f9]")}>
                <b className="-mb-px w-[146px] pt-px pl-[5px] text-[13px] tracking-[0.38px] whitespace-nowrap">{label.map((t) => <div key={t}>{t}</div>)}</b>
                <div className="pl-[5px] font-light tracking-[-0.4px] whitespace-nowrap text-[#1c1c1c]">{value.map((t) => <div key={t}>{t}</div>)}</div>
              </div>
            ))}
          </div>
        </div>
        <div className="ml-[18px] flex w-[17px] flex-col items-center bg-[#f1f1f1]">
          <span className="flex h-[19px] items-center"><Arrow /></span>
          <span className="mt-[355px] h-[171px] w-[13px] bg-[#c1c1c1]" />
        </div>
      </div>
      <PlainButton className="absolute top-[782px] left-[5px]" />
    </aside>
  );
}

/* ---------- Downloads shelf ---------- */

const Archive = () => (
  <svg width="17" height="16" viewBox="0 0 17 16" className="shrink-0">
    <path d="M2 0h13l2 1v14l-2 1H3z" fill="#0c0c0c" />
    <path d="M2 1l13-.5V4L4 4.500z" fill="#8d0f50" /><path d="M4 4.200h12v1.100H4z" fill="#f06cc0" />
    <path d="M4 6.300h11.500v2.700H4z" fill="#2346a0" /><path d="M4 9h12v1.100H4z" fill="#b6d2f5" />
    <path d="M4 11.300h11.500V14H4z" fill="#12703a" /><path d="M4 13.800h12v1.100H4z" fill="#8fe8b4" />
    <path d="M0 .8l3 1.200v3.200L0 4zM0 6l3 1v3L0 9zM0 11l3 1v3.200L0 14z" fill="#ededed" />
    <path d="M5 0h2v4H5z" fill="#e7d34a" />
  </svg>
);
const Picture = () => (
  <svg width="14" height="16" viewBox="0 0 14 16" className="shrink-0"><path d="M1 0h9l3 3v13H1z" fill="#f3f3f3" /><path d="M10 0l3 3h-3z" fill="#b9b9b9" /><rect x="3" y="5" width="8" height="7" fill="#3f63cf" /><path d="M3.500 11l2-3 2 2 2-3 1.200 4z" fill="#dfe8ff" /></svg>
);

const FILES = [["Sewer_Treatment_P....zip"], ["MilitaryBase_NC.zip"], ["GenX_symbology.zip"], ["FFTrainingCenter_NC.zip"], ["airports_NC.zip"], ["IMG_4663.JPG", 1], ["71380594_243796....jpg", 1]];

function Downloads() {
  return (
    <div className="flex h-[50px] shrink-0 border-t border-[#1f2224] bg-[#323639] pl-[4px] text-[12.500px] text-[#e8eaed]">
      {FILES.map(([name, pic]) => (
        <div key={name} className="my-2 flex w-[227px] items-start border-r border-[#6a6d70] pt-[8px] pl-[16px]">
          {pic ? <Picture /> : <Archive />}
          <span className={(pic ? "ml-[15px]" : "ml-[12px]") + " mt-[3px] w-[150px] leading-[17px] tracking-[-0.2px] whitespace-nowrap"}>{name}</span>
          <svg className="mt-[5px] ml-[3px]" width="11" height="7" viewBox="0 0 11 7" fill="none" stroke="#b8bbbe" strokeWidth="1.600"><path d="M1 6l4.500-4.500L10 6" /></svg>
        </div>
      ))}
      <span className="mt-[7px] ml-[213px] flex h-[32px] w-[77px] items-center justify-center rounded border border-[#5f6367] bg-[#292c2f] text-[12px] font-semibold tracking-[-0.3px]">Show all</span>
      <span className="mt-[19px] ml-[14px] text-[#c0c3c6]"><Cross size={10} w={1.300} /></span>
    </div>
  );
}

/* ---------- Taskbar ---------- */

const APPS = [
  { name: "cortana", icon: <circle cx="12" cy="12" r="6.800" fill="none" stroke="#f2f2f2" strokeWidth="2" /> },
  { name: "firefox", icon: <g><circle cx="12" cy="13" r="10.500" fill="#ff5a36" /><path d="M2 14a10 10 0 0 0 20 1c0 6-4 9-10 9S2 20 2 14z" fill="#f0338a" /><path d="M15 0c1 4 8 6 7.500 14-.5 5-4 8-8 8 4-3 4-7 2-10-1-2-3-5-1.500-12z" fill="#ffd43a" /><circle cx="12" cy="12" r="4.800" fill="#7a3fd6" /><path d="M2 8l3-4 2 3 5 1-2 2-3 2-5 1z" fill="#ff9c2b" /></g> },
  { name: "explorer", icon: <g><path d="M1 3h8l2 2h12v17H1z" fill="#e0a219" /><path d="M1 6h22v15H1z" fill="#ffd867" /><path d="M5 23V13h14v10h-4v-5H9v5z" fill="#3f97dc" /></g> },
  { name: "cloud", icon: <g><rect x="1" y="1" width="22" height="22" rx="2" fill="#85b817" /><path d="M2.500 13.500c0-2 2.500-2.500 3.500-1 .5-2-.5-4 2-5.500 3-1.500 5.500 0 5.500 2.500C15.500 8 17 9 17 11c2-1.500 4.500 0 4.500 2s-3 2.500-5 1.500c-2.500 2-5 1.500-6-.5-2 2-8 3-8-.5z" fill="#fff" /><path d="M8 9.500c1.500-1.500 3.500-.5 3 1" fill="none" stroke="#85b817" strokeWidth="1.200" /></g> },
  { name: "office", icon: <g><rect x="0" y="0" width="23" height="23" rx="2.500" fill="#2d8a33" stroke="#4ea34f" /><path d="M5.500 6l7-2v13l-7 2zM12.500 6l3-1v12.500l-7 2M15.500 7l2.500-.8V18l-6 2M7.500 8.500l3-.8M7.500 11l3-.8M7.500 13.500l3-.8" fill="none" stroke="#fff" strokeWidth="1.300" /></g> },
  { name: "edge", icon: <path d="M2 11C3 4 8 1.500 12 1.500c6 0 10 4 10 9.500v3H9c0 4 6 6 11.500 3v4.500C13 25 4 22 4 14c0-3 2-5.500 5-7-3 .5-5.500 2-7 4zm7-.5h7c0-5-6-5-7 0z" fill="#0c78d4" fillRule="evenodd" /> },
  { name: "ball", icon: <g><circle cx="12" cy="12" r="10.500" fill="#f3b84c" /><circle cx="12" cy="12" r="8.500" fill="#f9df9d" /><path d="M4 8l8 3 6-5M12 11l2 9M5 17l7-6 8 4" fill="none" stroke="#fbeac0" strokeWidth="1.500" /></g> },
  { name: "remote", icon: <g><path d="M8 1l14 4v12L9 12z" fill="#4fb0f2" stroke="#d9ecf8" strokeWidth=".8" /><path d="M4 19l9-3 9 3-7 3z" fill="#c9d3da" /><path d="M1 15l6-1 5 2-6 1.500z" fill="#e2e6ea" /></g> },
  { name: "qgis", icon: <g><circle cx="12" cy="12" r="8.500" fill="none" stroke="#76a82a" strokeWidth="5" /><path d="M13 12l10 10h-6l-6-6z" fill="#4b8b22" /><path d="M11 9l5 2 2 5-6-3z" fill="#f0a13a" /></g> },
  { name: "rstudio", icon: <g><circle cx="12" cy="12" r="11.500" fill="#2f6bc4" /><ellipse cx="12" cy="6" rx="9" ry="5" fill="#8fb9ee" fillOpacity=".7" /><text x="12" y="17" textAnchor="middle" fontFamily="Liberation Serif" fontWeight="700" fontSize="14" fill="#fff">R</text></g> },
  { name: "notepad", open: true, icon: <g><rect x="2" y="1" width="18" height="22" fill="#f3f5ea" stroke="#c9cfc0" strokeWidth=".8" /><path d="M3 14l16-2v10H3z" fill="#6fc02c" /><path d="M6 7v6M6 7h3M10 7v6M12 10h3M16 10h3" stroke="#222" strokeWidth="1.200" /><path d="M22 1l-8 15-2 2 0-3 8-14z" fill="#eeb43c" /></g> },
  { name: "matlab", icon: <g><path d="M0 14l7-4 4 3-4 6-4-1z" fill="#3f86c7" /><path d="M7 10c4-2 6-8 8-8l-6 17-2 0z" fill="#7d2418" /><path d="M15 2c3 3 5 12 8 16-4-2-5 1-7 2-2 2-3 3-4 3z" fill="#e0682a" /></g> },
  { name: "zoom", icon: <g><rect x=".5" y=".5" width="23" height="23" rx="5.500" fill="#4a8cf7" /><path d="M5 8h8a2 2 0 0 1 2 2v6H7a2 2 0 0 1-2-2zM16 11l3-2.500v7L16 13z" fill="#fff" /></g> },
  { name: "chrome", open: true, active: true, icon: <g><circle cx="12" cy="12" r="11" fill="#ffd042" /><path d="M12 12L2.500 6.500A11 11 0 0 1 21.500 6.500H12z" fill="#e0483a" /><path d="M2.500 6.500A11 11 0 0 0 11 23l4.500-8L12 12z" fill="#2fa24f" /><circle cx="12" cy="12" r="5.200" fill="#fff" /><circle cx="12" cy="12" r="4" fill="#4a8af4" /></g> },
  { name: "code", icon: <g><path d="M17.500 0v6.500L4 18l-3-2.500z" fill="#1277bd" /><path d="M1 8.500L4 6l13.500 11.500V24z" fill="#1b8fd6" /><path d="M17 0l6.500 2.500v19L17 24z" fill="#2aa9f2" /></g> },
  { name: "cisco", open: true, icon: <g><circle cx="12" cy="12" r="11" fill="#e3e7e6" /><path d="M1.500 12C4 6 11 4.500 16 8c3 2.500 4.500 6 4.500 10-2-3-4-5.500-8-6.500-4-1-8-.5-11 .5z" fill="#3c9b54" /><path d="M22.500 10c-6-1-11 3-11.500 8 0 2 .5 3 1.500 5 1-4 3-6 5-7 3-1.500 5-1 5-6z" fill="#23618e" /><circle cx="11" cy="13.500" r="2.300" fill="#f2f4f3" /></g> },
  { name: "terminal", open: true, icon: <g><rect x="1" y="3" width="22" height="18" fill="#050505" stroke="#999" /><path d="M1 3h22v2.500H1z" fill="#ddd" /><text x="3" y="12" fontFamily="Liberation Mono" fontSize="6" fill="#fff">C:\_</text></g> },
  { name: "putty", open: true, icon: <g><path d="M1 1l18 1 2 13-17 0z" fill="#d8dadd" /><path d="M3 2.500l14 1 2 10-13-1z" fill="#1733c9" /><path d="M7 16l10 0-2 5-9-1z" fill="#b9bcc0" /><circle cx="18" cy="18" r="5" fill="#e4efe0" /><path d="M16 16l2 2-2 2M20 16l-2 2" stroke="#3d9a3a" strokeWidth="1.200" fill="none" /></g> },
  { name: "gimp", open: true, icon: <g><path d="M7 5l3 3 6-1 5-5 1 8-5 5H8z" fill="#b5b0ac" /><circle cx="11" cy="10" r="1.200" fill="#222" /><rect x="0" y="13" width="24" height="10" fill="#fff" /><path d="M0 14h4v4H0z" fill="#d33" /><path d="M3 17h4v5H3z" fill="#36c" /><path d="M1 19h3v4H1z" fill="#3a3" /><text x="8" y="20.500" fontFamily="Liberation Sans" fontSize="6.500" fill="#222" fontWeight="700" textLength="15" lengthAdjust="spacingAndGlyphs">PFAS</text></g> },
];

function Taskbar() {
  return (
    <div className="flex h-[40px] shrink-0 bg-[linear-gradient(90deg,#2e2c2a_20%,#33301f_23%,#26263a_30%,#3e2628_38%,#3b2729_45%,#33302a_47%,#42282a_50%,#40282a_60%,#22303a_62%,#42282a_66%,#3b3a26_72%,#3a3728_80%,#3d2b28_88%,#453a28_96%)] text-[#e6e6e6]">
      <div className="flex w-[48px] items-center justify-center bg-[#171b4a]">
        <svg width="16" height="16" viewBox="0 0 16 16" fill="#fff"><path d="M0 2.200l6.600-.9v6.300H0zM7.400 1.200L16 0v7.600H7.400zM0 8.400h6.600v6.300L0 13.800zM7.400 8.400H16V16l-8.600-1.200z" /></svg>
      </div>
      <div className="flex w-[344px] items-center border border-[#6a6a6a] bg-[#333] pl-[11px] text-[14.500px] text-[#cfcfcf]">
        <svg width="17" height="17" viewBox="0 0 17 17" fill="none" stroke="#e6e6e6" strokeWidth="1.400"><circle cx="10.500" cy="6.500" r="5" /><path d="M7 10l-6 6.500" /></svg>
        <span className="mt-px ml-[11px] tracking-[-0.3px]">Type here to search</span>
      </div>
      {APPS.map((a) => (
        <div key={a.name} className={"relative flex w-[49.100px] shrink-0 items-center justify-center " + (a.active ? "bg-[#665a5b]" : "")}>
          <svg width="24" height="24" viewBox="0 0 24 24">{a.icon}</svg>
          {a.open && <span className={"absolute bottom-0 h-[2px] bg-[#b4c7e8] " + (a.active ? "inset-x-0" : "inset-x-[4px]")} />}
        </div>
      ))}
      <div className="ml-auto flex items-center pr-[3px]">
        <svg width="13" height="8" viewBox="0 0 13 8" fill="none" stroke="#eee" strokeWidth="1.400"><path d="M1 7l5.500-5.500L12 7" /></svg>
        <svg className="mt-1 ml-[13px]" width="13" height="13" viewBox="0 0 13 13" fill="none" stroke="#bbb"><path d="M1 12.500A11.500 11.500 0 0 1 12.500 1M4.500 12.500a8 8 0 0 1 8-8M8 12.500A4.500 4.500 0 0 1 12.500 8" strokeWidth="1.300" /><circle cx="11.500" cy="11.500" r="1.500" fill="#ccc" /></svg>
        <svg className="ml-[9px]" width="14" height="15" viewBox="0 0 14 15"><path d="M0 0l7 4 7-4v11l-7 4-7-4zM3 5v5l4 2 4-2V5L7 7z" fill="#c22a33" fillRule="evenodd" /></svg>
        <div className="ml-[15px] w-[64px] text-center text-[12px] leading-[18px] tracking-[-0.4px] whitespace-nowrap text-white">12:19 PM<br />11/14/2019</div>
        <svg className="ml-[7px]" width="26" height="30" viewBox="0 0 26 30"><path d="M2 5h15v13H9l-4 4v-4H2z" fill="#fff" /><path d="M5 9h9M5 12h9M5 15h6" stroke="#444" /><circle cx="17" cy="20" r="7.500" fill="#3b3b3b" stroke="#888" /><text x="17" y="24" textAnchor="middle" fontSize="11" fontFamily="Open Sans" fill="#fff">7</text></svg>
        <span className="ml-[3px] h-[38px] w-px bg-[#75706a]" />
      </div>
    </div>
  );
}

export default function App() {
  return (
    <div className="flex h-[1080px] w-[1920px] flex-col overflow-hidden bg-black font-['Open_Sans',sans-serif]">
      <TabStrip />
      <Toolbar />
      <Bookmarks />
      <Header />
      <main className="flex h-[812px] shrink-0">
        <LeftPanel />
        <div className="w-[1042px] shrink-0">
          <MapView />
          <Dock />
        </div>
        <Popup />
      </main>
      <Downloads />
      <Taskbar />
    </div>
  );
}
